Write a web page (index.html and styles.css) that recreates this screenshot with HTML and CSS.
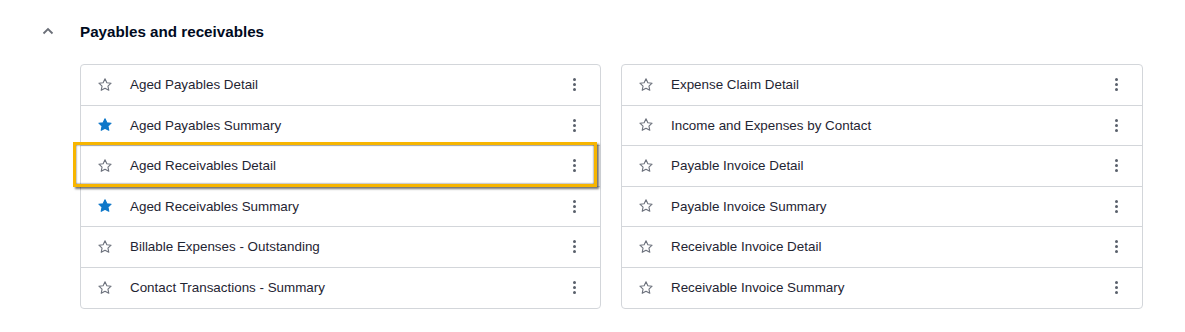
FILE: index.html
```html
<!DOCTYPE html>
<html lang="en">
<head>
    <meta charset="UTF-8">
    <title>Reports | Payables and receivables</title>
    <link rel="stylesheet" href="styles.css">
</head>
<body>
    <section class="report-group">
        <header class="group-header">
            <button class="toggle" aria-label="Collapse">
                <svg width="12" height="8" viewBox="0 0 12 8"><path d="M1.5 6.5 L6 2 L10.5 6.5" fill="none" stroke="#6b6f78" stroke-width="1.8"/></svg>
            </button>
            <h2 class="group-title">Payables and receivables</h2>
        </header>

        <div class="columns">
            <!-- Left column -->
            <ul class="report-list">
                <li class="report-row">
                    <span class="star"><svg viewBox="0 0 16 16"><path d="M8 1.8l1.85 3.9 4.25.5-3.15 2.9.85 4.2L8 11.2l-3.8 2.1.85-4.2L1.9 6.2l4.25-.5z"/></svg></span>
                    <span class="report-name">Aged Payables Detail</span>
                    <span class="kebab"><i></i><i></i><i></i></span>
                </li>
                <li class="report-row">
                    <span class="star starred"><svg viewBox="0 0 16 16"><path d="M8 1.8l1.85 3.9 4.25.5-3.15 2.9.85 4.2L8 11.2l-3.8 2.1.85-4.2L1.9 6.2l4.25-.5z"/></svg></span>
                    <span class="report-name">Aged Payables Summary</span>
                    <span class="kebab"><i></i><i></i><i></i></span>
                </li>
                <li class="report-row focused">
                    <span class="star"><svg viewBox="0 0 16 16"><path d="M8 1.8l1.85 3.9 4.25.5-3.15 2.9.85 4.2L8 11.2l-3.8 2.1.85-4.2L1.9 6.2l4.25-.5z"/></svg></span>
                    <span class="report-name">Aged Receivables Detail</span>
                    <span class="kebab"><i></i><i></i><i></i></span>
                </li>
                <li class="report-row">
                    <span class="star starred"><svg viewBox="0 0 16 16"><path d="M8 1.8l1.85 3.9 4.25.5-3.15 2.9.85 4.2L8 11.2l-3.8 2.1.85-4.2L1.9 6.2l4.25-.5z"/></svg></span>
                    <span class="report-name">Aged Receivables Summary</span>
                    <span class="kebab"><i></i><i></i><i></i></span>
                </li>
                <li class="report-row">
                    <span class="star"><svg viewBox="0 0 16 16"><path d="M8 1.8l1.85 3.9 4.25.5-3.15 2.9.85 4.2L8 11.2l-3.8 2.1.85-4.2L1.9 6.2l4.25-.5z"/></svg></span>
                    <span class="report-name">Billable Expenses - Outstanding</span>
                    <span class="kebab"><i></i><i></i><i></i></span>
                </li>
                <li class="report-row">
                    <span class="star"><svg viewBox="0 0 16 16"><path d="M8 1.8l1.85 3.9 4.25.5-3.15 2.9.85 4.2L8 11.2l-3.8 2.1.85-4.2L1.9 6.2l4.25-.5z"/></svg></span>
                    <span class="report-name">Contact Transactions - Summary</span>
                    <span class="kebab"><i></i><i></i><i></i></span>
                </li>
            </ul>

            <!-- Right column -->
            <ul class="report-list">
                <li class="report-row">
                    <span class="star"><svg viewBox="0 0 16 16"><path d="M8 1.8l1.85 3.9 4.25.5-3.15 2.9.85 4.2L8 11.2l-3.8 2.1.85-4.2L1.9 6.2l4.25-.5z"/></svg></span>
                    <span class="report-name">Expense Claim Detail</span>
                    <span class="kebab"><i></i><i></i><i></i></span>
                </li>
                <li class="report-row">
                    <span class="star"><svg viewBox="0 0 16 16"><path d="M8 1.8l1.85 3.9 4.25.5-3.15 2.9.85 4.2L8 11.2l-3.8 2.1.85-4.2L1.9 6.2l4.25-.5z"/></svg></span>
                    <span class="report-name">Income and Expenses by Contact</span>
                    <span class="kebab"><i></i><i></i><i></i></span>
                </li>
                <li class="report-row">
                    <span class="star"><svg viewBox="0 0 16 16"><path d="M8 1.8l1.85 3.9 4.25.5-3.15 2.9.85 4.2L8 11.2l-3.8 2.1.85-4.2L1.9 6.2l4.25-.5z"/></svg></span>
                    <span class="report-name">Payable Invoice Detail</span>
                    <span class="kebab"><i></i><i></i><i></i></span>
                </li>
                <li class="report-row">
                    <span class="star"><svg viewBox="0 0 16 16"><path d="M8 1.8l1.85 3.9 4.25.5-3.15 2.9.85 4.2L8 11.2l-3.8 2.1.85-4.2L1.9 6.2l4.25-.5z"/></svg></span>
                    <span class="report-name">Payable Invoice Summary</span>
                    <span class="kebab"><i></i><i></i><i></i></span>
                </li>
                <li class="report-row">
                    <span class="star"><svg viewBox="0 0 16 16"><path d="M8 1.8l1.85 3.9 4.25.5-3.15 2.9.85 4.2L8 11.2l-3.8 2.1.85-4.2L1.9 6.2l4.25-.5z"/></svg></span>
                    <span class="report-name">Receivable Invoice Detail</span>
                    <span class="kebab"><i></i><i></i><i></i></span>
                </li>
                <li class="report-row">
                    <span class="star"><svg viewBox="0 0 16 16"><path d="M8 1.8l1.85 3.9 4.25.5-3.15 2.9.85 4.2L8 11.2l-3.8 2.1.85-4.2L1.9 6.2l4.25-.5z"/></svg></span>
                    <span class="report-name">Receivable Invoice Summary</span>
                    <span class="kebab"><i></i><i></i><i></i></span>
                </li>
            </ul>
        </div>
    </section>
</body>
</html>
```

FILE: styles.css
```css
body {
    margin: 0;
    padding: 0;
    background: #fff;
    font-family: "Liberation Sans", Arial, sans-serif;
    color: #1f2533;
}

.report-group {
    padding: 18px 42px 0 80px;
}

/* Header */
.group-header {
    position: relative;
    display: flex;
    align-items: center;
    height: 26px;
}

.toggle {
    position: absolute;
    left: -39px;
    top: 6px;
    width: 14px;
    height: 14px;
    padding: 0;
    border: none;
    background: none;
    display: flex;
    align-items: center;
    justify-content: center;
}

.group-title {
    margin: 0;
    font-size: 15.2px;
    font-weight: 700;
    color: #000a1e;
}

/* Two columns of report cards */
.columns {
    display: grid;
    grid-template-columns: 521px 522px;
    column-gap: 20px;
    margin-top: 20px;
}

.report-list {
    list-style: none;
    margin: 0;
    padding: 0;
    border: 1px solid #d3d6da;
    border-radius: 4px;
}

.report-row {
    position: relative;
    box-sizing: border-box;
    height: 40.5px;
    display: flex;
    align-items: center;
    border-bottom: 1px solid #d3d6da;
    font-size: 13.4px;
}

.report-row:last-child {
    border-bottom: none;
}

.star {
    width: 16px;
    height: 16px;
    margin-left: 16px;
    margin-right: 17px;
}

.star svg {
    display: block;
    width: 16px;
    height: 16px;
    fill: none;
    stroke: #6d727d;
    stroke-width: 1.1;
    stroke-linejoin: round;
}

.star.starred svg {
    fill: #0f78c9;
    stroke: #0f78c9;
}

.report-name {
    flex-grow: 1;
}

.kebab {
    display: flex;
    flex-direction: column;
    gap: 2px;
    width: 3px;
    margin-right: 24px;
}

.kebab i {
    display: block;
    width: 3px;
    height: 3px;
    border-radius: 50%;
    background: #59606b;
}

/* Keyboard focus ring on a row */
.report-row.focused::after {
    content: "";
    position: absolute;
    left: -8px;
    right: 3px;
    top: -4px;
    bottom: -1px;
    border: 3px solid #f7b500;
    box-shadow: inset 0 0 2px 0 rgba(0, 0, 0, 0.75), 2px 2px 2px rgba(0, 0, 0, 0.55);
    pointer-events: none;
}
```
